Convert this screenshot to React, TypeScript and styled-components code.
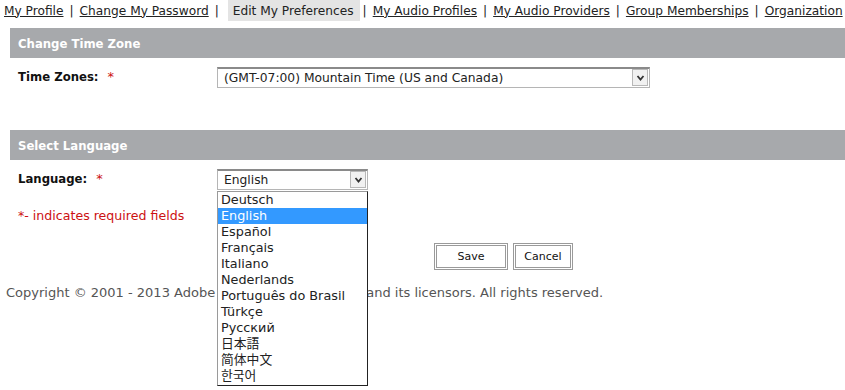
import React from 'react';
import styled, { createGlobalStyle } from 'styled-components';

const GlobalStyle = createGlobalStyle`
  body {
    margin: 0;
    background: #ffffff;
    font-family: 'DejaVu Sans', Verdana, sans-serif;
    font-size: 13px;
    color: #222;
  }
`;

const Page = styled.div`
  width: 845px;
  height: 390px;
  overflow: hidden;
  position: relative;
`;

const Nav = styled.div`
  display: flex;
  align-items: center;
  height: 21px;
  padding-left: 4px;
  white-space: nowrap;
  font-size: 12.2px;
`;

const NavLink = styled.a`
  color: #222;
  text-decoration: underline;
  cursor: pointer;
`;

const ActiveTab = styled.span`
  display: flex;
  align-items: center;
  height: 21px;
  padding: 0 6px 0 5px;
  margin-left: 3px;
  background: #e4e4e4;
  color: #222;
`;

const Sep = styled.span`
  padding: 0 6px;
  color: #222;
`;

const Section = styled.div<{ $top: number }>`
  margin: ${(p) => p.$top}px 0 0 10px;
`;

const SectionHeader = styled.div`
  height: 30px;
  display: flex;
  align-items: center;
  padding: 1px 0 0 8px;
  box-sizing: border-box;
  background: #a7a9ac;
  color: #ffffff;
  font-weight: bold;
  font-size: 11.7px;
`;

const FormRow = styled.div<{ $top: number }>`
  display: flex;
  align-items: flex-start;
  margin-top: ${(p) => p.$top}px;
  padding-left: 8px;
`;

const Label = styled.div`
  width: 199px;
  font-weight: bold;
  font-size: 11.7px;
  color: #111;
  padding-top: 2px;
`;

const Star = styled.span`
  color: #cc1111;
  margin-left: 9px;
  font-weight: normal;
  font-size: 13px;
`;

const SelectBox = styled.div<{ $w: number; $h: number }>`
  position: relative;
  box-sizing: border-box;
  width: ${(p) => p.$w}px;
  height: ${(p) => p.$h}px;
  border: 1px solid #b5b5b5;
  border-top: 2px solid #8a8a8a;
  background: #fff;
  display: flex;
  align-items: center;
  padding-left: 6px;
  font-size: 12.3px;
  color: #222;
`;

const ArrowBtn = styled.div`
  position: absolute;
  right: 1px;
  top: 0;
  bottom: 1px;
  width: 16px;
  box-sizing: border-box;
  border: 1px solid #b8b8b8;
  background: #f1f1f1;
  display: flex;
  align-items: center;
  justify-content: center;
`;

const DropList = styled.ul`
  position: absolute;
  left: -1px;
  top: calc(100% + 2px);
  width: 151px;
  box-sizing: border-box;
  margin: 0;
  padding: 0 0 1px 0;
  list-style: none;
  background: #fff;
  border: 1px solid #222;
  border-top: 1px solid #9a9a9a;
  border-left: 1px solid #9a9a9a;
  z-index: 5;
`;

const DropItem = styled.li<{ $sel?: boolean }>`
  height: 16px;
  line-height: 16px;
  padding-left: 3px;
  font-size: 12.8px;
  font-family: 'DejaVu Sans', 'Noto Sans CJK JP', sans-serif;
  background: ${(p) => (p.$sel ? '#3399ff' : 'transparent')};
  color: ${(p) => (p.$sel ? '#ffffff' : '#222')};
`;

const Required = styled.div`
  color: #cc1111;
  font-size: 12.6px;
  margin-top: 18px;
  padding-left: 8px;
`;

const Buttons = styled.div`
  display: flex;
  gap: 5px;
  margin-top: 20px;
  padding-left: 424px;
`;

const Button = styled.button<{ $w: number }>`
  width: ${(p) => p.$w}px;
  height: 27px;
  box-sizing: border-box;
  border: 3px double #9a9a9a;
  background: #fff;
  font-family: 'DejaVu Sans', Verdana, sans-serif;
  font-size: 11px;
  color: #111;
  padding: 0;
`;

const Copyright = styled.div`
  margin-top: 15px;
  padding-left: 6px;
  color: #555;
`;

const Chevron = () => (
  <svg width="9" height="6" viewBox="0 0 9 6">
    <path d="M1.5 1 L4.5 4.5 L7.5 1" fill="none" stroke="#333" strokeWidth="1.8" />
  </svg>
);

const links = ['My Audio Profiles', 'My Audio Providers', 'Group Memberships', 'Organization'];
const languages = [
  'Deutsch',
  'English',
  'Español',
  'Français',
  'Italiano',
  'Nederlands',
  'Português do Brasil',
  'Türkçe',
  'Русский',
  '日本語',
  '简体中文',
  '한국어',
];

export default function App() {
  return (
    <Page>
      <GlobalStyle />
      <Nav>
        <NavLink>My Profile</NavLink>
        <Sep>|</Sep>
        <NavLink>Change My Password</NavLink>
        <Sep>|</Sep>
        <ActiveTab>Edit My Preferences</ActiveTab>
        {links.map((l, i) => (
          <React.Fragment key={l}>
            <Sep style={i === 0 ? { paddingLeft: 3 } : undefined}>|</Sep>
            <NavLink>{l}</NavLink>
          </React.Fragment>
        ))}
      </Nav>
      <Section $top={7}>
        <SectionHeader>Change Time Zone</SectionHeader>
        <FormRow $top={9}>
          <Label>
            Time Zones:<Star>*</Star>
          </Label>
          <SelectBox $w={433} $h={21}>
            (GMT-07:00) Mountain Time (US and Canada)
            <ArrowBtn>
              <Chevron />
            </ArrowBtn>
          </SelectBox>
        </FormRow>
      </Section>
      <Section $top={42}>
        <SectionHeader>Select Language</SectionHeader>
        <FormRow $top={9}>
          <Label>
            Language:<Star>*</Star>
          </Label>
          <SelectBox $w={151} $h={21}>
            English
            <ArrowBtn>
              <Chevron />
            </ArrowBtn>
            <DropList>
              {languages.map((l) => (
                <DropItem key={l} $sel={l === 'English'}>
                  {l}
                </DropItem>
              ))}
            </DropList>
          </SelectBox>
        </FormRow>
        <Required>*- indicates required fields</Required>
        <Buttons>
          <Button $w={74}>Save</Button>
          <Button $w={60}>Cancel</Button>
        </Buttons>
      </Section>
      <Copyright>
        Copyright © 2001 - 2013 Adobe Systems Incorporated and its licensors. All rights reserved.
      </Copyright>
    </Page>
  );
}
